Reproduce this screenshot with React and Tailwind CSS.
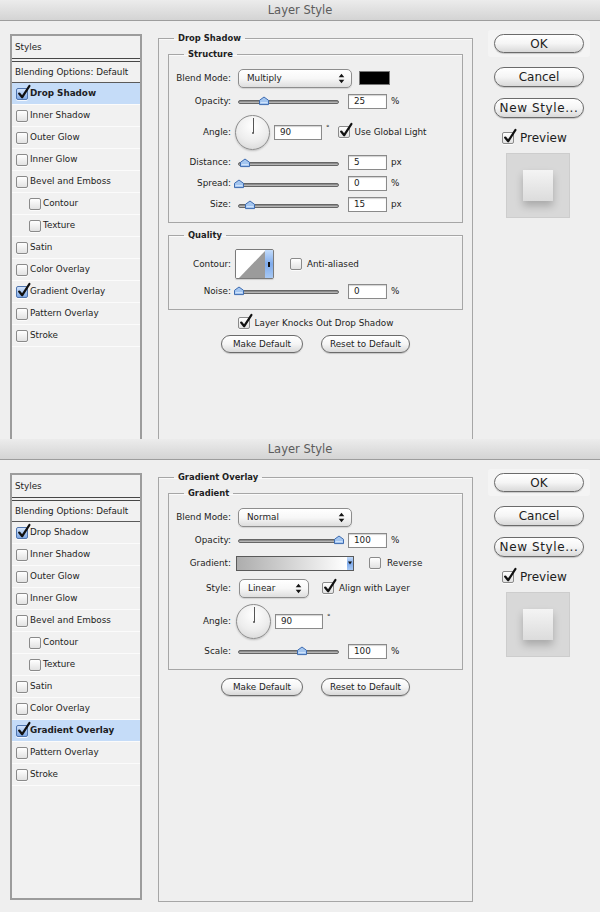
import React from 'react';

const effects = [
  { name: 'Drop Shadow', on: true },
  { name: 'Inner Shadow' },
  { name: 'Outer Glow' },
  { name: 'Inner Glow' },
  { name: 'Bevel and Emboss' },
  { name: 'Contour', sub: true },
  { name: 'Texture', sub: true },
  { name: 'Satin' },
  { name: 'Color Overlay' },
  { name: 'Gradient Overlay', on: true },
  { name: 'Pattern Overlay' },
  { name: 'Stroke' },
];

const CheckBox = ({ checked, blue }) => (
  <span
    className={`relative inline-block h-[12px] w-[12px] shrink-0 rounded-[2px] border ${
      blue
        ? 'border-[#4f74ad] bg-gradient-to-b from-[#d3e4fb] to-[#7fa9e6]'
        : 'border-[#8a8a8a] bg-gradient-to-b from-white to-[#e2e2e2]'
    } shadow-[0_1px_0_rgba(255,255,255,0.8)]`}
  >
    {checked && (
      <svg className="absolute -top-[4px] left-[0px] overflow-visible" width="14" height="15" viewBox="0 0 14 15">
        <path d="M2.2 8.6 L5.2 12.2 L12.4 1" fill="none" stroke="#111" strokeWidth="2.3" strokeLinecap="round" strokeLinejoin="round" />
      </svg>
    )}
  </span>
);

const Slider = ({ at }) => (
  <div className="relative h-[10px] w-[101px] shrink-0">
    <div className="absolute inset-x-0 top-[4px] h-[4px] rounded-full border border-[#666] bg-gradient-to-b from-[#7a7a7a] to-[#c8c8c8]" />
    <svg className="absolute top-0 -ml-[6px]" style={{ left: at }} width="12" height="10" viewBox="0 0 12 10">
      <path d="M1.5 4.3 L6 1 L10.5 4.3 V8.6 H1.5 Z" fill="#a4c6f0" stroke="#3d6bb0" strokeWidth="1" strokeLinejoin="round" />
      <path d="M2.5 6.5 H9.5" stroke="#cfe2fa" strokeWidth="1" />
    </svg>
  </div>
);

const Field = ({ value, wide }) => (
  <div
    className={`flex h-[15px] ${wide ? 'w-[48px]' : 'w-[39px]'} shrink-0 items-center border border-[#8a8a8a] bg-white pl-[5px] shadow-[inset_0_1px_1px_rgba(0,0,0,0.18)]`}
  >
    {value}
  </div>
);

const Popup = ({ label, narrow }) => (
  <div
    className={`flex h-[19px] ${narrow ? 'w-[70px]' : 'w-[114px]'} shrink-0 items-center justify-between rounded-[5px] border border-[#8d8d8d] bg-gradient-to-b from-white via-[#f7f7f7] to-[#dedede] pl-[8px] pr-[6px] shadow-[0_1px_1px_rgba(0,0,0,0.12)]`}
  >
    <span>{label}</span>
    <svg width="7" height="11" viewBox="0 0 7 11">
      <path d="M3.5 0.8 L6.3 4.2 H0.7 Z M3.5 10.2 L6.3 6.8 H0.7 Z" fill="#151515" />
    </svg>
  </div>
);

const Pill = ({ children, className }) => (
  <div
    className={`flex shrink-0 items-center justify-center rounded-full border border-[#6b6b6b] bg-gradient-to-b from-white via-[#f5f5f5] to-[#d9d9d9] shadow-[0_1px_1px_rgba(0,0,0,0.18)] ${className}`}
  >
    {children}
  </div>
);

const Dial = () => (
  <div className="relative h-[35px] w-[35px] shrink-0 rounded-full border border-[#8c8c8c] bg-[radial-gradient(circle_at_50%_30%,#ffffff,#ededed_55%,#d2d2d2)] shadow-[0_1px_2px_rgba(0,0,0,0.2)]">
    <div className="absolute left-[16.5px] top-[2px] h-[15px] w-px bg-[#555]" />
    <div className="absolute left-[16px] top-[16px] h-[2px] w-[2px] rounded-full bg-[#555]" />
  </div>
);

const Row = ({ label, h, children }) => (
  <div className={`flex items-center ${h}`}>
    <span className="w-[62px] shrink-0 text-right">{label}</span>
    <div className="ml-[7px] flex items-center">{children}</div>
  </div>
);

const SliderRow = ({ label, at, value, unit }) => (
  <Row label={label} h="h-[21px]">
    <Slider at={at} />
    <div className="ml-[9px]">
      <Field value={value} />
    </div>
    <span className="ml-[4px]">{unit}</span>
  </Row>
);

// outer groups have side padding, so their legend needs a smaller offset
const Group = ({ title, outer, className, children }) => (
  <fieldset className={`border border-[#a6a6a6] shadow-[inset_0_1px_0_#fafafa] ${className}`}>
    <legend className={`${outer ? 'ml-[6px]' : 'ml-[15px]'} px-[4px] text-[8.4px] font-bold leading-[11px]`}>{title}</legend>
    {children}
  </fieldset>
);

const StylesList = ({ selected }) => (
  <div className="mt-[13px] ml-[10px] flex h-[427px] w-[132px] shrink-0 flex-col border-2 border-[#9c9c9c] bg-[#f1f1f1]">
    <div className="flex h-[22px] items-center pl-[3px]">Styles</div>
    <div className="h-[4px] border-y border-[#474747]" />
    <div className="flex h-[21px] items-center border-b border-[#5a5a5a] pl-[3px]">Blending Options: Default</div>
    {effects.map((e) => {
      const active = e.name === selected;
      return (
        <div
          key={e.name}
          className={`flex h-[22px] items-center border-b border-[#fbfbfb] ${e.sub ? 'pl-[17px]' : 'pl-[4px]'} ${
            active ? 'bg-[#c5dcf8] font-bold' : ''
          }`}
        >
          <CheckBox checked={e.on} blue={e.on} />
          <span className="ml-[2px]">{e.name}</span>
        </div>
      );
    })}
  </div>
);

const ContourSwatch = () => (
  <div className="-ml-[3px] flex h-[30px] w-[39px] shrink-0 overflow-hidden rounded-[2px] border border-[#7a7a7a] shadow-[0_1px_1px_rgba(0,0,0,0.15)]">
    <svg width="29" height="28" viewBox="0 0 29 28">
      <rect width="29" height="28" fill="#fff" />
      <path d="M3 28 L29 1 V28 Z" fill="#9b9b9b" />
    </svg>
    <div className="flex w-[8px] items-center justify-center bg-gradient-to-b from-[#c4dcfa] via-[#7fabec] to-[#a8c9f4]">
      <div className="h-[5px] w-[2px] bg-[#111]" />
    </div>
  </div>
);

const GradientStrip = () => (
  <div className="-ml-[2px] flex h-[15px] w-[118px] shrink-0 border border-[#5a5a5a]">
    <div className="flex-1 bg-gradient-to-r from-[#adadad] to-white" />
    <div className="flex w-[6px] items-center justify-center bg-gradient-to-b from-[#c4dcfa] via-[#7fabec] to-[#a8c9f4]">
      <svg width="4" height="4" viewBox="0 0 4 4">
        <path d="M0 0.5 H4 L2 3.5 Z" fill="#111" />
      </svg>
    </div>
  </div>
);

const FooterButtons = ({ className }) => (
  <div className={`flex justify-center gap-[18px] ${className}`}>
    <Pill className="h-[18px] w-[82px]">Make Default</Pill>
    <Pill className="h-[18px] w-[89px]">Reset to Default</Pill>
  </div>
);

const DropShadowPanel = () => (
  <Group title="Drop Shadow" outer className="mt-[12px] ml-[16px] h-[430px] w-[315px] shrink-0 px-[9px]">
    <Group title="Structure" className="mt-[5px] px-0 pt-[6px] pb-[7px]">
      <Row label="Blend Mode:" h="h-[24px]">
        <Popup label="Multiply" />
        <div className="ml-[7px] h-[14px] w-[31px] border border-[#777] bg-black" />
      </Row>
      <Row label="Opacity:" h="h-[22px]">
        <Slider at={26} />
        <div className="ml-[9px]">
          <Field value="25" />
        </div>
        <span className="ml-[4px]">%</span>
      </Row>
      <Row label="Angle:" h="h-[40px]">
        <div className="-ml-[3px]">
          <Dial />
        </div>
        <div className="ml-[4px]">
          <Field value="90" wide />
        </div>
        <span className="ml-[4px] -mt-[8px] text-[7px]">°</span>
        <div className="ml-[8px] flex items-center">
          <CheckBox checked />
          <span className="ml-[5px]">Use Global Light</span>
        </div>
      </Row>
      <SliderRow label="Distance:" at={6.5} value="5" unit="px" />
      <SliderRow label="Spread:" at={1} value="0" unit="%" />
      <SliderRow label="Size:" at={12} value="15" unit="px" />
    </Group>

    <Group title="Quality" className="mt-[7px] px-0 pt-[6px] pb-[8px]">
      <Row label="Contour:" h="h-[34px]">
        <ContourSwatch />
        <div className="ml-[16px] flex items-center">
          <CheckBox />
          <span className="ml-[5px]">Anti-aliased</span>
        </div>
      </Row>
      <Row label="Noise:" h="h-[20px]">
        <Slider at={1} />
        <div className="ml-[9px]">
          <Field value="0" />
        </div>
        <span className="ml-[4px]">%</span>
      </Row>
    </Group>

    <div className="mt-[3px] flex h-[20px] items-center justify-center">
      <CheckBox checked />
      <span className="ml-[5px]">Layer Knocks Out Drop Shadow</span>
    </div>
    <FooterButtons className="mt-[2px]" />
  </Group>
);

const GradientOverlayPanel = () => (
  <Group title="Gradient Overlay" outer className="mt-[12px] ml-[16px] h-[430px] w-[315px] shrink-0 px-[9px]">
    <Group title="Gradient" className="mt-[5px] px-0 pt-[6px] pb-[8px]">
      <Row label="Blend Mode:" h="h-[24px]">
        <Popup label="Normal" />
      </Row>
      <Row label="Opacity:" h="h-[22px]">
        <Slider at={101} />
        <div className="ml-[9px]">
          <Field value="100" />
        </div>
        <span className="ml-[4px]">%</span>
      </Row>
      <Row label="Gradient:" h="h-[24px]">
        <GradientStrip />
        <div className="ml-[15px] flex items-center">
          <CheckBox />
          <span className="ml-[6px]">Reverse</span>
        </div>
      </Row>
      <Row label="Style:" h="h-[26px]">
        <div className="ml-[1px]">
          <Popup label="Linear" narrow />
        </div>
        <div className="ml-[13px] flex items-center">
          <CheckBox checked />
          <span className="ml-[5px]">Align with Layer</span>
        </div>
      </Row>
      <Row label="Angle:" h="h-[40px]">
        <div className="-ml-[2px]">
          <Dial />
        </div>
        <div className="ml-[4px]">
          <Field value="90" wide />
        </div>
        <span className="ml-[4px] -mt-[8px] text-[7px]">°</span>
      </Row>
      <Row label="Scale:" h="h-[20px]">
        <Slider at={64} />
        <div className="ml-[9px]">
          <Field value="100" />
        </div>
        <span className="ml-[4px]">%</span>
      </Row>
    </Group>
    <FooterButtons className="mt-[8px]" />
  </Group>
);

const ActionColumn = () => (
  <div className="mt-[13px] ml-[21px] flex w-[90px] shrink-0 flex-col text-[12px] leading-[14px]">
    <div className="-mx-[6px] -mt-[4px] rounded-[3px] bg-[#f4f4f4] px-[6px] pt-[4px] pb-[4px]">
      <Pill className="h-[19px] w-[90px]">OK</Pill>
    </div>
    <Pill className="mt-[10px] h-[20px] w-[90px]">Cancel</Pill>
    <Pill className="mt-[11px] h-[20px] w-[90px] tracking-[0.6px]">New Style...</Pill>
    <div className="mt-[13px] flex h-[14px] items-center pl-[8px]">
      <CheckBox checked />
      <span className="ml-[6px]">Preview</span>
    </div>
    <div className="mt-[8px] ml-[12px] flex h-[65px] w-[64px] items-center justify-center border border-[#cdcdcd] bg-[#d8d8d8]">
      <div className="h-[31px] w-[30px] bg-gradient-to-b from-[#f4f4f4] to-[#dcdcdc] shadow-[0_5px_8px_rgba(0,0,0,0.22)]" />
    </div>
  </div>
);

const Dialog = ({ height, selected, children }) => (
  <div className={`flex ${height} flex-col overflow-hidden bg-[#efefef]`}>
    <div className="flex h-[21px] shrink-0 items-center justify-center border-b border-[#9d9d9d] bg-gradient-to-b from-[#ececec] to-[#d4d4d4] text-[11.5px] text-[#5c5c5c]">
      Layer Style
    </div>
    <div className="flex items-start">
      <StylesList selected={selected} />
      {children}
      <ActionColumn />
    </div>
  </div>
);

export default function App() {
  return (
    <div className="w-[600px] h-[912px] overflow-hidden bg-[#efefef] font-['DejaVu_Sans',sans-serif] text-[8.8px] leading-[11px] text-[#1d1d22]">
      <Dialog height="h-[439px]" selected="Drop Shadow">
        <DropShadowPanel />
      </Dialog>
      <Dialog height="h-[473px]" selected="Gradient Overlay">
        <GradientOverlayPanel />
      </Dialog>
    </div>
  );
}
